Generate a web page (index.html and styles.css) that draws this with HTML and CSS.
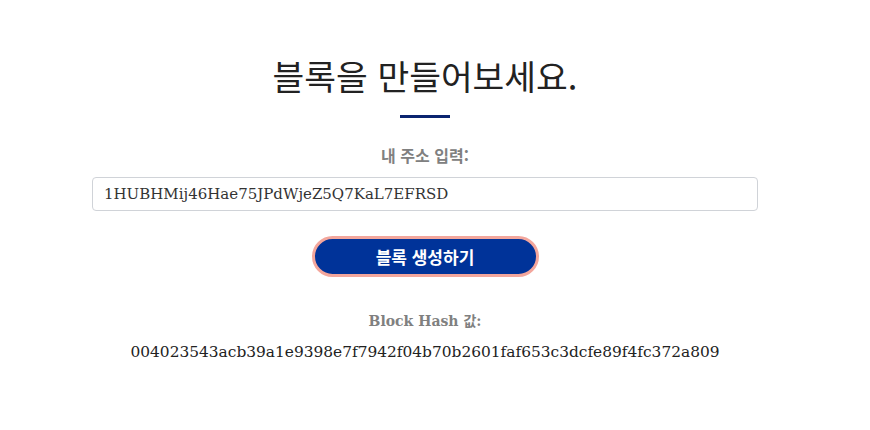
FILE: index.html
```html
<!DOCTYPE html>
<html lang="ko">
<head>
<meta charset="utf-8">
<link rel="stylesheet" href="styles.css">
</head>
<body>
<main class="wrap">
  <h1 class="title">블록을 만들어보세요.</h1>
  <div class="rule"></div>
  <label class="label addr-label" for="addr">내 주소 입력:</label>
  <input id="addr" class="field" type="text" value="1HUBHMij46Hae75JPdWjeZ5Q7KaL7EFRSD">
  <button class="btn" type="button">블록 생성하기</button>
  <div class="label hash-label">Block Hash 값:</div>
  <div class="hash">004023543acb39a1e9398e7f7942f04b70b2601faf653c3dcfe89f4fc372a809</div>
</main>
</body>
</html>
```

FILE: styles.css
```css
html, body {
  margin: 0;
  padding: 0;
  background: #ffffff;
}
body {
  font-family: "DejaVu Serif", "Noto Sans CJK KR", serif;
  color: #222;
}
.wrap {
  width: 666px;
  margin-left: 92px;
  padding-top: 55px;
  display: flex;
  flex-direction: column;
  align-items: center;
}
.title {
  margin: 0;
  font-family: "Noto Sans CJK KR", sans-serif;
  font-weight: 400;
  font-size: 34.5px;
  line-height: 40px;
  color: #222;
}
.rule {
  width: 50px;
  height: 3px;
  background: #0a2470;
  margin-top: 20px;
}
.label {
  font-family: "DejaVu Serif", "Noto Sans CJK KR", sans-serif;
  font-weight: 700;
  font-size: 14px;
  line-height: 20px;
  color: #808080;
}
.addr-label {
  margin-top: 27px;
  font-family: "Noto Sans CJK KR", sans-serif;
  font-size: 16px;
}
.field {
  margin-top: 12px;
  width: 100%;
  box-sizing: border-box;
  height: 34px;
  border: 1px solid #d0d3d8;
  border-radius: 4px;
  padding: 0 11px;
  font-family: "DejaVu Serif", serif;
  font-size: 15px;
  color: #333;
  outline: none;
}
.btn {
  margin-top: 25px;
  width: 227px;
  height: 41px;
  box-sizing: border-box;
  border: 3px solid #f3a69c;
  border-radius: 21px;
  background: #003399;
  color: #fff;
  font-family: "Noto Sans CJK KR", sans-serif;
  font-weight: 700;
  font-size: 17px;
  cursor: pointer;
}
.hash-label {
  margin-top: 34px;
}
.hash {
  margin-top: 9px;
  font-family: "DejaVu Serif", serif;
  font-size: 15.4px;
  line-height: 24px;
  color: #222;
}
```
